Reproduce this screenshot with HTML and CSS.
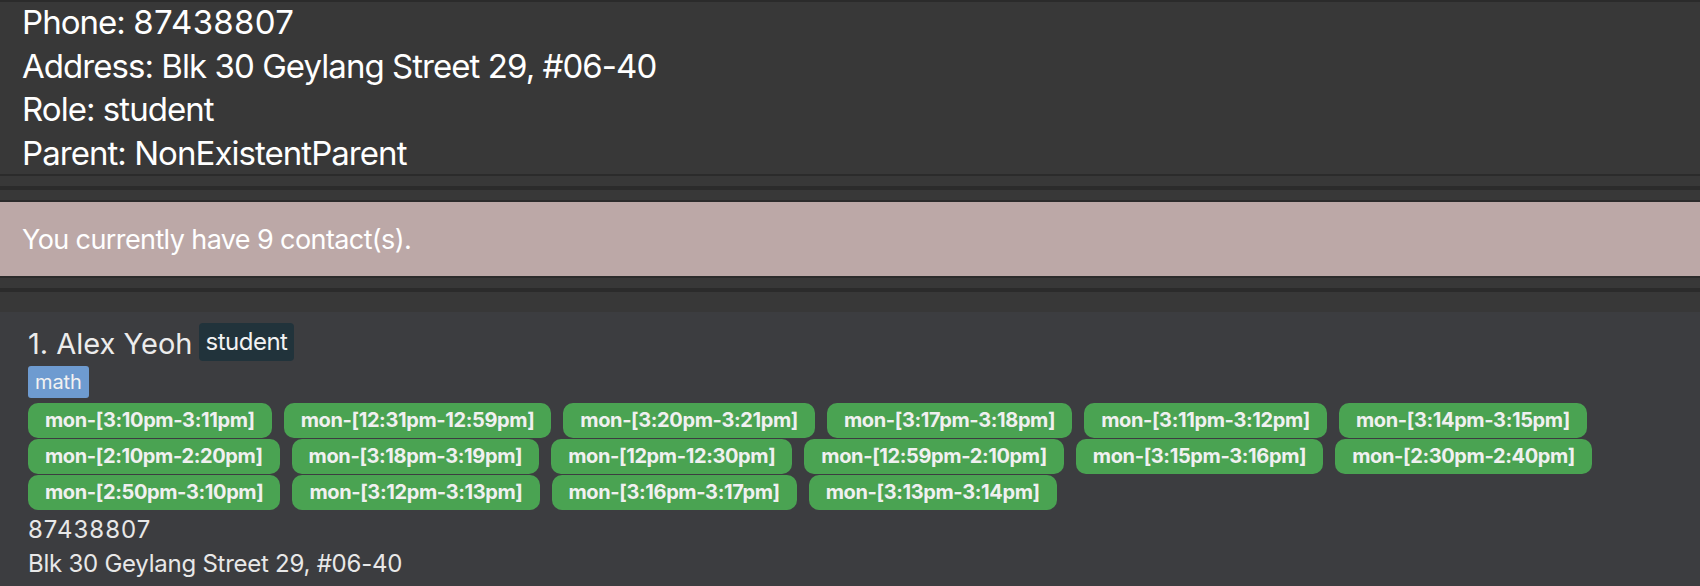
FILE: index.html
```html
<!DOCTYPE html>
<html lang="en">
<head>
<meta charset="utf-8">
<title>Contacts</title>
<link rel="stylesheet" href="styles.css">
</head>
<body>
<div class="app">
  <section class="detail">
    <div class="detail-text">
      <p>Phone: <span class="num">87438807</span></p>
      <p>Address: Blk 30 Geylang Street 29, #06-40</p>
      <p>Role: student</p>
      <p>Parent: NonExistentParent</p>
    </div>
  </section>
  <div class="splitter"></div>
  <section class="status">
    <p>You currently have 9 contact(s).</p>
  </section>
  <div class="splitter splitter-last"></div>
  <section class="list">
    <article class="card">
      <div class="name-row">
        <span class="name">1. Alex Yeoh</span>
        <span class="role-tag">student</span>
      </div>
      <div class="subjects">
        <span class="subject-tag">math</span>
      </div>
      <div class="slots">
        <span class="slot">mon-[3:10pm-3:11pm]</span>
        <span class="slot">mon-[12:31pm-12:59pm]</span>
        <span class="slot">mon-[3:20pm-3:21pm]</span>
        <span class="slot">mon-[3:17pm-3:18pm]</span>
        <span class="slot">mon-[3:11pm-3:12pm]</span>
        <span class="slot">mon-[3:14pm-3:15pm]</span>
        <span class="slot">mon-[2:10pm-2:20pm]</span>
        <span class="slot">mon-[3:18pm-3:19pm]</span>
        <span class="slot">mon-[12pm-12:30pm]</span>
        <span class="slot">mon-[12:59pm-2:10pm]</span>
        <span class="slot">mon-[3:15pm-3:16pm]</span>
        <span class="slot">mon-[2:30pm-2:40pm]</span>
        <span class="slot">mon-[2:50pm-3:10pm]</span>
        <span class="slot">mon-[3:12pm-3:13pm]</span>
        <span class="slot">mon-[3:16pm-3:17pm]</span>
        <span class="slot">mon-[3:13pm-3:14pm]</span>
      </div>
      <p class="info"><span class="num">87438807</span></p>
      <p class="info">Blk 30 Geylang Street 29, #06-40</p>
    </article>
  </section>
</div>
</body>
</html>
```

FILE: styles.css
```css
* { box-sizing: border-box; }

html, body {
  margin: 0;
  padding: 0;
  background: #3c3d40;
  font-family: Inter, "Noto Sans", sans-serif;
}

p { margin: 0; }

.app {
  width: 1700px;
  height: 586px;
  overflow: hidden;
  display: flex;
  flex-direction: column;
}

.detail {
  height: 176px;
  flex: none;
  background: #383838;
  border-top: 2px solid #2b2b2b;
  border-bottom: 2px solid #2b2b2b;
  overflow: hidden;
}

.detail-text {
  margin-top: -1px;
  padding-left: 22px;
  color: #ffffff;
  font-size: 33px;
  line-height: 43.5px;
  letter-spacing: -0.95px;
}

.detail-text .num {
  letter-spacing: 0.3px;
}

.splitter {
  height: 24px;
  background: #2b2b2b;
  border-top: 10px solid #383838;
  border-bottom: 10px solid #383838;
  flex: none;
}

.splitter-last {
  height: 34px;
  border-bottom-width: 20px;
}

.status {
  height: 78px;
  flex: none;
  background: #bca8a7;
  border-top: 2px solid #2b2b2b;
  border-bottom: 2px solid #2b2b2b;
  padding: 22px 0 0 22px;
  color: #ffffff;
  font-size: 27px;
  line-height: 32px;
  letter-spacing: -0.6px;
}

.list {
  flex: 1;
  background: #3c3d40;
}

.card {
  padding: 11px 28px 0 28px;
  color: #ececec;
}

.name-row {
  display: flex;
  align-items: flex-start;
  gap: 7px;
  height: 38px;
}

.name {
  margin-top: 3px;
  font-size: 29px;
  line-height: 35px;
  color: #ececec;
  letter-spacing: 0;
}

.role-tag {
  background: #21333b;
  color: #f2f2f2;
  font-size: 24px;
  line-height: 38px;
  height: 38px;
  padding: 0 7px 0 6px;
  border-radius: 4px;
  letter-spacing: -0.5px;
}

.subjects {
  display: flex;
  margin-top: 5px;
}

.subject-tag {
  background: #6e9bd0;
  color: #f2f2f2;
  font-size: 20px;
  line-height: 32px;
  height: 32px;
  padding: 0 7px;
  border-radius: 3px;
  letter-spacing: -0.1px;
}

.slots {
  display: flex;
  flex-wrap: wrap;
  column-gap: 12px;
  row-gap: 1px;
  margin-top: 5px;
  width: 1644px;
}

.slot {
  background: #4aa352;
  color: #f0f0f0;
  font-weight: 700;
  font-size: 20px;
  line-height: 35px;
  height: 35px;
  padding: 0 17px;
  border-radius: 10px;
  letter-spacing: -0.38px;
}

.info {
  font-size: 24px;
  line-height: 34px;
  color: #e8e8e8;
  letter-spacing: -0.25px;
}

.info .num {
  letter-spacing: 1px;
}

.slots + .info {
  margin-top: 3px;
}
```
